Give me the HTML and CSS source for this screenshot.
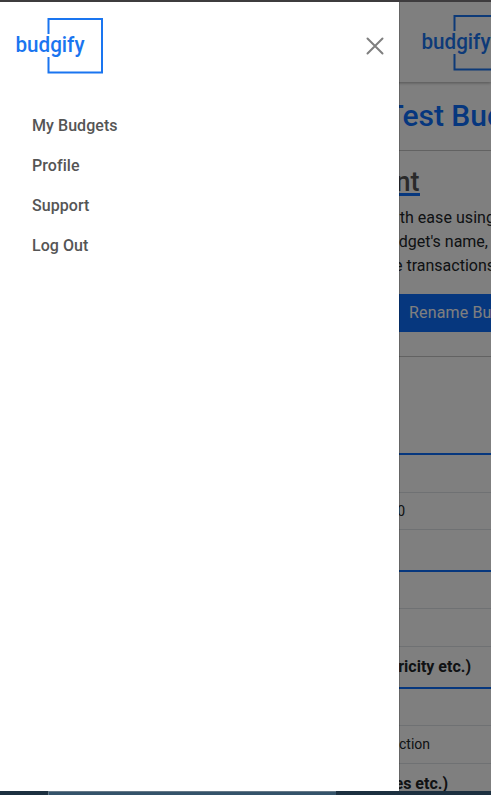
FILE: index.html
```html
<!DOCTYPE html>
<html lang="en">
<head>
<meta charset="utf-8">
<title>Budgify</title>
<link rel="stylesheet" href="styles.css">
</head>
<body>
<div class="window-edge"></div>
<div class="viewport">
  <main class="page">
    <header class="page-header">
      <svg class="logo" width="90" height="60" viewBox="0 0 90 60"><path class="logo-frame" d="M32.500 17V2H86V55.500H32.500V40"/><text class="logo-text" x="-.5" y="34.500" textLength="69" lengthAdjust="spacingAndGlyphs">budgify</text></svg>
    </header>
    <h1 class="title">Test Budget</h1>
    <section class="management">
      <h2 class="heading"><span>Management</span></h2>
      <p class="copy"><span class="line line-a">with ease using</span><span class="line line-b">budget's name,</span><span class="line line-c">the transactions</span></p>
      <div class="button">Rename Budget</div>
    </section>
    <section class="tables">
      <div class="row caption tall"></div>
      <div class="row head"></div>
      <div class="row zero"><span>0</span></div>
      <div class="row caption after-zero"></div>
      <div class="row r36"></div>
      <div class="row r38"></div>
      <div class="row caption bold utilities"><span>(Electricity etc.)</span></div>
      <div class="row r36"></div>
      <div class="row r38 action"><span>Transaction</span></div>
      <div class="row bold clothes"><span>(Clothes etc.)</span></div>
    </section>
  </main>
  <div class="backdrop"></div>
  <aside class="drawer">
    <div class="drawer-header">
      <svg class="logo" width="90" height="60" viewBox="0 0 90 60"><path class="logo-frame" d="M32.500 17V2H86V55.500H32.500V40"/><text class="logo-text" x="-.5" y="34.500" textLength="69" lengthAdjust="spacingAndGlyphs">budgify</text></svg>
      <svg class="close" width="18" height="18" viewBox="0 0 18 18"><path d="M1.500 1.500L16.500 16.500M16.500 1.500L1.500 16.500"/></svg>
    </div>
    <nav class="menu">
      <a>My Budgets</a>
      <a>Profile</a>
      <a>Support</a>
      <a>Log Out</a>
    </nav>
  </aside>
</div>
<footer class="taskbar"><div class="task"></div></footer>
</body>
</html>
```
FILE: styles.css
```css
* { box-sizing: border-box; }
body {
  margin: 0;
  height: 795px;
  overflow: hidden;
  display: grid;
  grid-template-rows: 2px 789px 4px;
  font-family: Roboto, sans-serif;
  font-size: 16px;
  color: #212529;
}
h1, h2, p { margin: 0; font-weight: 500; }
.window-edge { background: #3e3c3e; }
.viewport { position: relative; overflow: hidden; background: #fff; }
.page { width: 491px; overflow: hidden; white-space: nowrap; }
.page-header {
  height: 80px;
  padding: 12px 0 0 422px;
  box-shadow: 0 1px 3px rgba(0, 0, 0, .35);
}
.logo { display: block; flex: none; overflow: visible; }
.logo-frame { fill: none; stroke: #1a75f0; stroke-width: 2; }
.logo-text { fill: #1a75f0; font-size: 22px; font-weight: 500; }
.title {
  height: 69px;
  padding: 15px 0 0 385.5px;
  border-bottom: 1px solid #c4c4c4;
  color: #0d6efd;
  font-size: 30px;
  line-height: 38px;
}
.management { height: 206px; border-bottom: 1px solid #c4c4c4; }
.heading { width: 419.5px; height: 54px; padding-top: 16px; text-align: right; font-size: 27px; line-height: 31px; color: #555; }
.heading span { display: inline-block; height: 29px; border-bottom: 3px solid #0d6efd; }
.copy { padding-top: 1px; font-weight: 400; line-height: 24px; }
.line { display: block; text-align: right; }
.line-a { width: 495px; letter-spacing: .05px; }
.line-b { width: 488px; }
.line-c { width: 495px; }
.button { height: 38px; margin: 16px 0 0; padding-left: 409px; background: #0d6efd; color: #fff; line-height: 37px; letter-spacing: .15px; }
.row { height: 37px; border-bottom: 1px solid #dee2e6; font-size: 14px; line-height: 37px; }
.row span { display: block; text-align: right; }
.caption { height: 41px; border-bottom: 2px solid #0d6efd; }
.tall { height: 98px; }
.head { height: 38px; }
.zero span { width: 405px; }
.after-zero { height: 42px; }
.r36 { height: 37px; }
.r38 { height: 38px; }
.action span { width: 430px; }
.bold { font-weight: 700; font-size: 16px; line-height: 40px; }
.utilities { height: 42px; }
.utilities span { width: 471px; }
.clothes span { width: 448px; }
.backdrop { position: absolute; inset: 0; background: rgba(0, 0, 0, .5); }
.drawer { position: absolute; inset: 0 auto 0 0; width: 399px; background: #fff; box-shadow: 1px 0 rgba(0, 0, 0, .2); }
.drawer-header { display: flex; justify-content: space-between; align-items: flex-start; padding: 15px 15px 0 16px; }
.close { margin-top: 20px; fill: none; stroke: #7f7f7f; stroke-width: 2; stroke-linecap: round; }
.menu { display: grid; grid-auto-rows: 40px; padding: 29px 0 0 32px; font-weight: 500; line-height: 40px; letter-spacing: .06px; color: #555; }
.taskbar { background: #1c3040; }
.task { width: 288px; height: 4px; margin-left: 48px; background: #34536a; border-top: 1px solid #647786; border-left: 1px solid #647786; }
```
